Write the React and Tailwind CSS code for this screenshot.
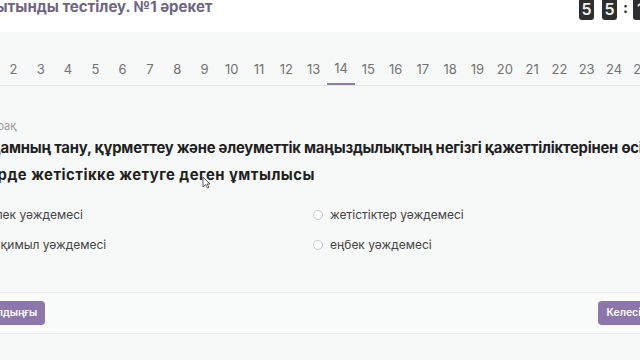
import React from 'react';

const tabs = Array.from({ length: 25 }, (_, i) => i + 1);

const Digit = ({ children }) => (
  <div className="w-[15px] h-[22px] -mt-[2px] bg-[#2e2e2e] rounded-[3px] flex items-center justify-center text-[#f0f0f0] text-[16px] font-semibold leading-none">
    {children}
  </div>
);

const Radio = ({ label }) => (
  <label className="flex items-center gap-[7px] h-[20px]">
    <span className="w-[10px] h-[10px] rounded-full border border-[#c9c9c9] bg-white shrink-0"></span>
    <span className="text-[12px] text-[#454545] whitespace-nowrap">{label}</span>
  </label>
);

export default function App() {
  return (
    <div className="relative w-[640px] h-[360px] overflow-hidden bg-[#f7f8f8] font-['Inter',sans-serif]">
      {/* header */}
      <div className="h-[32px] bg-white flex justify-between items-start">
        <h1 className="-ml-[34px] mt-[-1px] text-[15px] leading-[16px] font-bold text-[#6e6580] whitespace-nowrap">
          Қорытынды тестілеу. №1 әрекет
        </h1>
        <div className="flex items-start gap-[8px] -mr-[8px]">
          <Digit>5</Digit>
          <Digit>5</Digit>
          <span className="w-[4px] -mx-[2px] text-[#2e2e2e] text-[15px] font-bold leading-[16px]">:</span>
          <Digit>1</Digit>
        </div>
      </div>

      {/* question tabs */}
      <div className="mt-[23px] h-[31px] border-b border-[#e5e6e6] flex -ml-[27.5px]">
        {tabs.map((n) => (
          <div
            key={n}
            className={`w-[27.3px] shrink-0 flex items-center justify-center text-[13px] text-[#727272] ${n === 14 ? 'border-b-2 border-[#8b80a0]' : ''}`}
          >
            {n}
          </div>
        ))}
      </div>

      {/* question */}
      <div className="-ml-[20px]">
        <div className="mt-[33px] ml-[3px] text-[11px] leading-[14px] text-[#9a9a9a]">Сұрақ</div>
        <div className="mt-[2px] text-[14.8px] leading-[27px] font-bold text-[#1f1f1f] whitespace-nowrap">
          <div className="tracking-[-0.2px]">Адамның тану, құрметтеу және әлеуметтік маңыздылықтың негізгі қажеттіліктерінен өсіп</div>
          <div className="-ml-[9px] tracking-[0.5px]">өмірде жетістікке жетуге деген ұмтылысы</div>
        </div>

        <div className="mt-[16px] grid grid-cols-[345px_1fr] gap-y-[10px] -ml-[12px]">
          <Radio label="Тілек уәждемесі" />
          <Radio label="жетістіктер уәждемесі" />
          <Radio label="Іс-қимыл уәждемесі" />
          <Radio label="еңбек уәждемесі" />
        </div>
      </div>

      {/* footer */}
      <div className="mt-[37px] h-[42px] border-y border-[#e9eaea] bg-[#f9fafa] flex items-center justify-between">
        <button className="-ml-[19px] h-[24px] px-[8px] rounded-[4px] bg-[#8c76aa] text-white text-[10.5px] font-semibold">
          Алдыңғы
        </button>
        <button className="-mr-[10px] h-[24px] px-[9px] rounded-[4px] bg-[#8c76aa] text-white text-[10.5px] font-semibold">
          Келесі
        </button>
      </div>

      {/* mouse cursor */}
      <svg className="absolute left-[202px] top-[176px]" width="9" height="13" viewBox="0 0 9 13">
        <path d="M1 1 L1 11 L3.5 8.5 L5.5 12 L7 11.3 L5 8 L8 8 Z" fill="#fff" stroke="#333" strokeWidth="0.8" />
      </svg>
    </div>
  );
}
